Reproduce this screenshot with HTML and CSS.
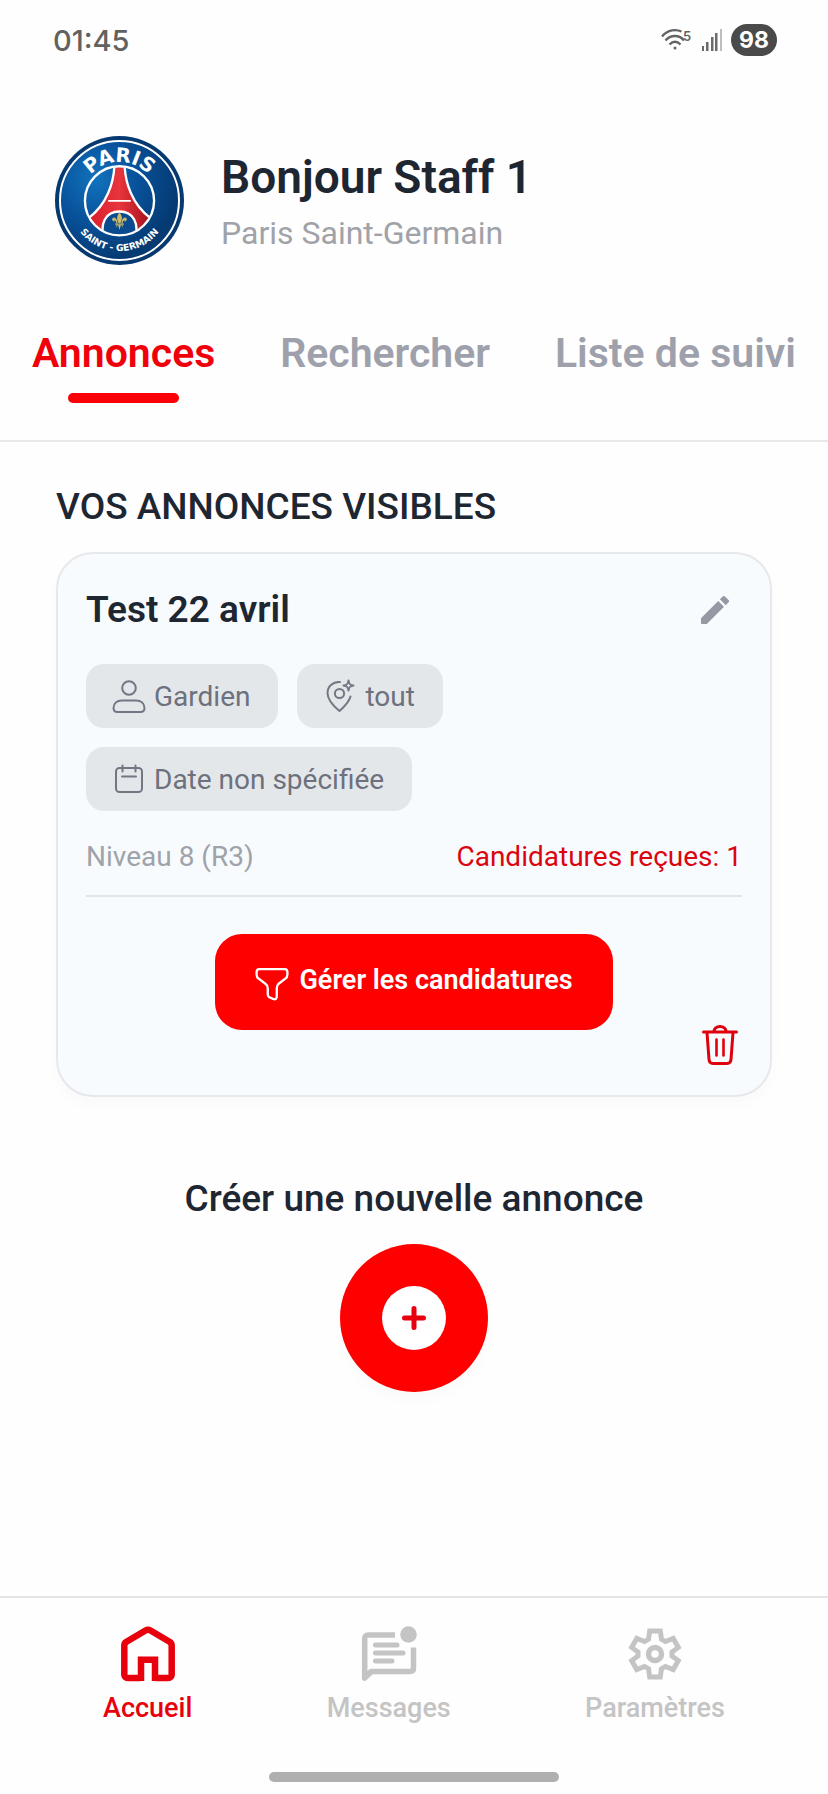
FILE: index.html
```html
<!DOCTYPE html>
<html lang="fr">
<head>
  <meta charset="UTF-8">
  <meta name="viewport" content="width=device-width, initial-scale=1">
  <title>Accueil - Annonces</title>
  <link rel="stylesheet" href="styles.css">
</head>
<body>
  <div class="status-bar">
    <span class="status-time">01:45</span>
    <div class="status-icons">
      <svg class="wifi" viewBox="0 0 32 24" fill="none" stroke="#636363" stroke-width="2.4">
        <path d="M1 8.500C7 1.500 15 1 20.500 3.500"/>
        <path d="M4.500 12.500C9.500 6.500 18.500 6.500 23 12.500"/>
        <path d="M8.500 16.500C12 13 16 13 19.500 16.500"/>
        <circle cx="14" cy="20" r="1.500" fill="#636363" stroke="none"/>
        <text x="22" y="13" class="wifi-text">5</text>
      </svg>
      <svg class="signal" viewBox="0 0 20 24" fill="#6a6a6a">
        <rect x="0" y="18" width="2" height="5"/>
        <rect x="4" y="14" width="2.500" height="9"/>
        <rect x="9" y="9" width="2.500" height="14"/>
        <rect x="13" y="5" width="2.500" height="18"/>
        <rect x="18" y="1" width="2" height="22" fill="#bdbdbd"/>
      </svg>
      <span class="battery">98</span>
    </div>
  </div>

  <header class="profile">
    <svg class="club-logo" viewBox="45 45 388 388" role="img" aria-label="Paris Saint-Germain">
      <defs>
        <radialGradient id="blue" cx="0.3" cy="0.32" r="0.7">
          <stop offset="0" stop-color="#1272bd"/>
          <stop offset="0.5" stop-color="#08519a"/>
          <stop offset="1" stop-color="#053a72"/>
        </radialGradient>
        <linearGradient id="red" x1="0" x2="1">
          <stop offset="0" stop-color="#d81f2c"/>
          <stop offset="0.5" stop-color="#e8343c"/>
          <stop offset="1" stop-color="#a3121d"/>
        </linearGradient>
        <clipPath id="inner"><circle cx="239" cy="240" r="102"/></clipPath>
        <path id="arcTop" d="M122 240A117 117 0 0 1 356 240"/>
        <path id="arcBottom" d="M87 239A152 152 0 0 0 391 239"/>
      </defs>
      <circle cx="239" cy="239" r="194" fill="#06396f"/>
      <circle cx="239" cy="239" r="179" fill="url(#blue)" stroke="#fff" stroke-width="6"/>
      <g clip-path="url(#inner)">
        <path d="M224 130H254C256 185 276 250 332 292L300 350H178L146 292C202 250 222 185 224 130Z" fill="url(#red)" stroke="#fff" stroke-width="7"/>
        <path d="M205 240H273" stroke="#fff" stroke-width="5"/>
        <path d="M192 350C180 310 196 272 239 272C282 272 298 310 286 350Z" fill="#0a4b8f" stroke="#fff" stroke-width="7"/>
      </g>
      <circle cx="239" cy="240" r="104" fill="none" stroke="#fff" stroke-width="7"/>
      <g fill="#cdbb6a">
        <path d="M239 275C230 286 230 295 236 307H242C248 295 248 286 239 275Z"/>
        <path d="M233 308C232 294 226 288 220 291C214 295 218 303 224 302C222 296 228 298 230 308Z"/>
        <path d="M245 308C246 294 252 288 258 291C264 295 260 303 254 302C256 296 250 298 248 308Z"/>
        <path d="M226 308H252V312H226ZM235 313H243L239 328ZM230 313L234 313L229 321ZM244 313H248L249 321Z"/>
      </g>
      <text class="logo-top"><textPath href="#arcTop" startOffset="50%">PARIS</textPath></text>
      <text class="logo-bottom"><textPath href="#arcBottom" startOffset="50%">SAINT - GERMAIN</textPath></text>
    </svg>
    <div>
      <h1>Bonjour Staff 1</h1>
      <p class="club">Paris Saint-Germain</p>
    </div>
  </header>

  <nav class="tabs">
    <a href="#annonces" class="active">Annonces</a>
    <a href="#rechercher">Rechercher</a>
    <a href="#suivi">Liste de suivi</a>
  </nav>

  <main>
    <h2>VOS ANNONCES VISIBLES</h2>

    <article class="card">
      <div class="card-head">
        <h3>Test 22 avril</h3>
        <button type="button" class="icon-btn edit" aria-label="Modifier">
          <svg viewBox="3 3 18 18" fill="#9699a3"><path d="M3 17.460v3.040c0 .28.220.5.500.5h3.040c.13 0 .26-.05.350-.15L17.810 9.940l-3.750-3.750L3.150 17.100c-.1.100-.15.220-.15.360zM20.710 7.040a1 1 0 0 0 0-1.410l-2.340-2.340a1 1 0 0 0-1.410 0l-1.830 1.830 3.750 3.750 1.830-1.830z"/></svg>
        </button>
      </div>

      <ul class="chips">
        <li>
          <svg viewBox="0 0 34 34"><circle cx="17" cy="9" r="6.800"/><path d="M10 21.500H24C29 21.500 32.500 24.500 32.500 29C32.500 31.500 31 33 28.500 33H5.500C3 33 1.500 31.500 1.500 29C1.500 24.500 5 21.500 10 21.500Z"/></svg>
          Gardien
        </li>
        <li>
          <svg viewBox="0 0 34 34"><path d="M17 3C9.500 2.500 4.500 8 4.500 14C4.500 21 11 27.500 16.500 32C21 28 26 23 27.500 17.500"/><circle cx="16.500" cy="14.500" r="4.600"/><path d="M25.500 1.500C26 5 27 6 30.500 6.500C27 7 26 8 25.500 11.500C25 8 24 7 20.500 6.500C24 6 25 5 25.500 1.500Z"/></svg>
          tout
        </li>
        <li>
          <svg viewBox="0 0 34 34"><rect x="4" y="6" width="26" height="24" rx="3.500"/><path d="M10.500 3.500V9.500M23.500 3.500V9.500M10 14.500H24"/></svg>
          Date non spécifiée
        </li>
      </ul>

      <div class="card-meta">
        <span>Niveau 8 (R3)</span>
        <span class="received">Candidatures reçues: 1</span>
      </div>

      <div class="card-actions">
        <button type="button" class="manage">
          <svg viewBox="0 0 32 32" fill="none" stroke="#fff" stroke-width="2.200" stroke-linejoin="round"><path d="M4 2H28C30 2 30.500 3 30.500 5V7C30.500 9 30 10 28.500 11L22 16C20.500 17.500 20.500 18.500 20.500 20V27C20.500 30 19.500 31 17 30L13.500 28.500C12 27.800 12 27 12 25V20C12 18 11.500 17 10 16L3.500 11C2 10 1.500 9 1.500 7V5C1.500 3 2 2 4 2Z"/></svg>
          <span>Gérer les candidatures</span>
        </button>
        <button type="button" class="icon-btn trash" aria-label="Supprimer">
          <svg viewBox="0 0 36 40" fill="none" stroke="#e0000c" stroke-width="3" stroke-linecap="round" stroke-linejoin="round"><path d="M1.500 7H34.500M12 6.500C12 3.500 14.500 1.500 18 1.500C21.500 1.500 24 3.500 24 6.500M5 7.500L7 34.500C7.200 37 8.500 38.500 11 38.500H25C27.500 38.500 28.800 37 29 34.500L31 7.500"/><path stroke-width="2.600" d="M14.500 14.500V30.500M21.500 14.500V30.500"/></svg>
        </button>
      </div>
    </article>

    <section class="create">
      <h2>Créer une nouvelle annonce</h2>
      <button type="button" class="add" aria-label="Créer une annonce">
        <svg viewBox="0 0 64 64"><circle cx="32" cy="32" r="32" fill="#fff"/><path d="M32 22.500V41.500M22.500 32H41.500" stroke="#e8000c" stroke-width="5" stroke-linecap="round"/></svg>
      </button>
    </section>
  </main>

  <nav class="bottom-nav">
    <a href="#accueil" class="active">
      <svg viewBox="0 0 56 56" fill="none" stroke="currentColor" stroke-width="6.500" stroke-linejoin="round"><path d="M20.700 52H8C5.500 52 4.300 50.500 4.300 48.500V19.500C4.300 17.800 5 16.800 6.500 15.800L25.500 4.500C27.200 3.500 28.800 3.500 30.500 4.500L49.500 15.800C51 16.800 51.700 17.800 51.700 19.500V48.500C51.700 50.500 50.500 52 48 52H35.300"/><path stroke-linejoin="miter" d="M21 55V33.800H35V55"/></svg>
      Accueil
    </a>
    <a href="#messages">
      <svg viewBox="0 0 56 56" fill="none" stroke="currentColor" stroke-width="5.500" stroke-linejoin="round"><path d="M34 9H7C5 9 3.700 10.300 3.700 12.300V51.500L10 45.500H49C51.500 45.500 52.500 44 52.500 42V21.500"/><path fill="currentColor" stroke="none" d="M1 48H12L5 54.500C3 55.500 1 54.500 1 52Z"/><path stroke-width="5" stroke-linecap="round" d="M14.500 19H36M14.500 27H42M14.500 35H31"/><circle cx="47.500" cy="8.500" r="11" fill="#fefefe" stroke="none"/><circle cx="47.500" cy="8.500" r="8.300" fill="currentColor" stroke="none"/></svg>
      Messages
    </a>
    <a href="#parametres">
      <svg viewBox="0 0 56 56" fill="none" stroke="currentColor" stroke-width="5"><path d="M22.700 5H33.300L34.500 13.300L38.500 15.600L46.200 12.500L51.300 21.400L45 26V30L51.300 34.600L46.200 43.500L38.500 40.400L34.500 42.700L33.300 51H22.700L21.500 42.700L17.500 40.400L9.800 43.500L4.700 34.600L11 30V26L4.700 21.400L9.800 12.500L17.500 15.600L21.500 13.300Z"/><circle cx="28" cy="28" r="6.500" stroke-width="5.500"/></svg>
      Paramètres
    </a>
  </nav>
  <div class="home-indicator"></div>
</body>
</html>
```
FILE: styles.css
```css
* { box-sizing: border-box; }
body { margin: 0; min-height: 100vh; display: flex; flex-direction: column; font-family: Roboto, sans-serif; background: #fefefe; color: #1e2632; }
h1, h2, h3, p, ul { margin: 0; padding: 0; font-weight: 500; }
a { text-decoration: none; }
button { border: 0; padding: 0; font-family: inherit; cursor: pointer; }
svg { display: block; flex: none; }

.status-bar { display: flex; justify-content: space-between; align-items: center; height: 80px; padding: 0 51px 0 53px; font-family: Inter, sans-serif; }
.status-time { font-size: 29px; font-weight: 500; color: #616161; }
.status-icons { display: flex; align-items: center; gap: 9px; }
.wifi { width: 32px; height: 24px; overflow: visible; }
.wifi-text { font-size: 13px; font-weight: 600; fill: #636363; stroke: none; }
.signal { width: 20px; height: 24px; }
.battery { height: 32px; padding: 0 8px; border-radius: 16px; background: #4a4a4a; color: #fff; font-size: 23px; font-weight: 700; line-height: 32px; }

.profile { display: flex; align-items: center; gap: 37px; padding: 56px 55px 64px; }
.club-logo { width: 129px; height: 129px; }
.logo-top, .logo-bottom { font-family: "DejaVu Sans", sans-serif; font-weight: 700; fill: #fff; text-anchor: middle; }
.logo-top { font-size: 60px; }
.logo-bottom { font-size: 28px; }
h1 { font-size: 46px; font-weight: 600; line-height: 56px; }
.club { font-size: 32px; font-weight: 400; line-height: 40px; margin-top: 8px; color: #a0a2a8; }

.tabs { display: flex; justify-content: space-between; padding: 0 32px 37px; border-bottom: 2px solid #e8e8e9; }
.tabs a { display: flex; flex-direction: column; align-items: center; gap: 16px; font-size: 41px; font-weight: 600; line-height: 48px; color: #9ea1ab; }
.tabs a::after { content: ""; width: 111px; height: 10px; border-radius: 5px; }
.tabs .active { color: #f0000a; }
.tabs .active::after { background: #fb0007; }

main { flex: 1; padding: 43px 56px; }
h2 { font-size: 37px; line-height: 44px; }
.card { margin-top: 23px; padding: 28px; border: 2px solid #e6e8eb; border-radius: 37px; background: #f8fbfe; box-shadow: 0 8px 16px rgba(0, 0, 0, 0.02); }
.card-head { display: flex; justify-content: space-between; align-items: center; }
h3 { font-size: 37px; font-weight: 600; line-height: 55px; }
.icon-btn { background: none; }
.edit svg { width: 28px; height: 28px; }
.edit { padding-right: 13px; }

.chips { display: flex; flex-wrap: wrap; gap: 19px; margin-top: 27px; padding-right: 128px; list-style: none; }
.chips li { display: flex; align-items: center; gap: 8px; height: 64px; padding: 0 28px 0 26px; border-radius: 18px; background: #e4e7ea; color: #6d717d; font-size: 28px; font-weight: 400; }
.chips svg { width: 34px; height: 34px; fill: none; stroke: #747783; stroke-width: 2; stroke-linecap: round; stroke-linejoin: round; }

.card-meta { display: flex; justify-content: space-between; margin-top: 28px; padding-bottom: 20px; border-bottom: 2px solid #e2e5e8; font-size: 28px; line-height: 36px; color: #9fa2a8; }
.received { color: #db0510; }

.card-actions { display: grid; grid-template-columns: 1fr auto 1fr; padding-top: 37px; }
.manage { grid-column: 2; display: flex; align-items: center; gap: 10px; height: 96px; margin-bottom: 37px; padding: 0 40px; border-radius: 27px; background: #fe0000; color: #fff; font-size: 27px; font-weight: 600; }
.manage svg { width: 34px; height: 34px; margin-top: 4px; }
.manage span { padding-bottom: 5px; }
.trash { justify-self: end; align-self: end; padding: 0 4px 2px 0; }
.trash svg { width: 36px; height: 40px; }

.create { display: flex; flex-direction: column; align-items: center; gap: 23px; margin-top: 80px; }
.add { display: flex; align-items: center; justify-content: center; width: 148px; height: 148px; border-radius: 50%; background: #fe0000; box-shadow: 0 8px 16px rgba(0, 0, 0, 0.02); }
.add svg { width: 64px; height: 64px; }

.bottom-nav { display: flex; justify-content: space-between; padding: 28px 103px 46px; border-top: 2px solid #e4e4e4; }
.bottom-nav a { display: flex; flex-direction: column; align-items: center; gap: 8px; font-size: 27px; font-weight: 500; line-height: 36px; color: #c4c4c4; }
.bottom-nav .active { color: #e8000c; }
.bottom-nav svg { width: 56px; height: 56px; }
.home-indicator { width: 35%; height: 10px; margin: 0 auto 12px; border-radius: 5px; background: #afafaf; }
```
